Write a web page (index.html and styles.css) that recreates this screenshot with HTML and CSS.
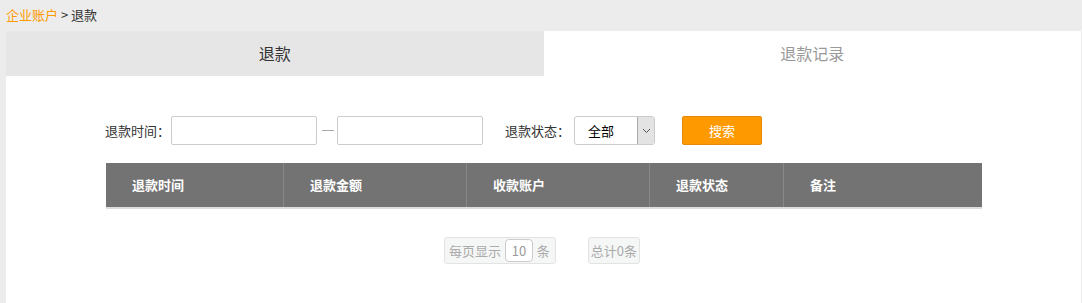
FILE: index.html
```html
<!DOCTYPE html>
<html>

<head>
    <title>退款</title>
    <link rel="stylesheet" href="styles.css">
</head>

<body>
    <div class="crumb"><a href="#">企业账户</a> &gt; 退款</div>

    <div class="panel">
        <div class="tabs">
            <div class="tab active">退款</div>
            <div class="tab">退款记录</div>
        </div>

        <div class="filter">
            <span class="label">退款时间：</span>
            <input type="text" class="date-input">
            <span class="dash"></span>
            <input type="text" class="date-input">
            <span class="label status-label">退款状态：</span>
            <div class="select-box">
                <span class="select-text">全部</span>
                <span class="select-arrow">
                    <svg width="9" height="6" viewBox="0 0 9 6"><path d="M1 1 L4.5 4.5 L8 1" fill="none" stroke="#555" stroke-width="1"/></svg>
                </span>
            </div>
            <button class="search-btn">搜索</button>
        </div>

        <div class="table-head">
            <div class="col c1">退款时间</div>
            <div class="col c2">退款金额</div>
            <div class="col c3">收款账户</div>
            <div class="col c4">退款状态</div>
            <div class="col c5">备注</div>
        </div>

        <div class="pager">
            <div class="pager-box">每页显示 <span class="page-size">10</span> 条</div>
            <div class="pager-box total">总计0条</div>
        </div>
    </div>
</body>

</html>
```

FILE: styles.css
```css
/* General Styles */
body {
    margin: 0;
    background-color: #ececec;
    font-family: "Noto Sans CJK SC", "Liberation Sans", sans-serif;
    font-size: 12px;
    color: #333;
    height: 303px;
    overflow: hidden;
}

.crumb {
    height: 31px;
    line-height: 29px;
    padding-left: 6px;
    font-size: 13px;
    color: #333;
}

.crumb a {
    color: #ff9900;
    text-decoration: none;
}

.panel {
    margin-left: 6px;
    width: 1075px;
    background-color: #fff;
    height: 272px;
}

/* Tabs */
.tabs {
    display: flex;
    height: 45px;
}

.tab {
    flex: 1;
    text-align: center;
    line-height: 45px;
    font-size: 16px;
    color: #999;
}

.tab.active {
    background-color: #e6e6e6;
    color: #333;
}

/* Filter */
.filter {
    display: flex;
    align-items: center;
    padding: 40px 0 0 99px;
    height: 29px;
    font-size: 13px;
}

.label {
    margin-right: 1px;
}

.date-input {
    width: 146px;
    height: 29px;
    box-sizing: border-box;
    border: 1px solid #ccc;
    border-radius: 2px;
    margin: 0;
}

.dash {
    display: inline-block;
    width: 12px;
    height: 1px;
    background-color: #aaa;
    margin: 0 3px 0 5px;
}

.status-label {
    margin-left: 22px;
    margin-right: 4px;
}

.select-box {
    display: flex;
    width: 81px;
    height: 29px;
    box-sizing: border-box;
    border: 1px solid #ccc;
    border-radius: 3px;
}

.select-text {
    flex: 1;
    line-height: 27px;
    padding-left: 13px;
    color: #000;
}

.select-arrow {
    width: 16px;
    background-color: #e3e3e3;
    border-left: 1px solid #aaa;
    display: flex;
    align-items: center;
    justify-content: center;
}

.search-btn {
    margin-left: 27px;
    width: 80px;
    height: 29px;
    background-color: #ff9900;
    border: 1px solid #e5890a;
    border-radius: 2px;
    color: #fff;
    font-family: inherit;
    font-size: 13px;
}

/* Table Header */
.table-head {
    display: flex;
    margin: 18px 0 0 100px;
    width: 876px;
    height: 46px;
    background-color: #737373;
    border-bottom: 2px solid #ddd;
    box-sizing: border-box;
}

.col {
    color: #fff;
    font-weight: bold;
    font-size: 13px;
    line-height: 44px;
    padding-left: 26px;
    box-sizing: border-box;
    border-right: 1px solid #888;
}

.c1 { width: 178px; }
.c2 { width: 183px; }
.c3 { width: 183px; }
.c4 { width: 134px; }
.c5 { width: 198px; border-right: none; }

/* Pager */
.pager {
    display: flex;
    margin: 28px 0 0 438px;
    gap: 32px;
}

.pager-box {
    height: 27px;
    line-height: 25px;
    box-sizing: border-box;
    border: 1px solid #e3e3e3;
    border-radius: 3px;
    background-color: #f5f6f6;
    color: #aaa;
    padding: 0 5px 0 4px;
    font-size: 13px;
    word-spacing: 1px;
}

.page-size {
    display: inline-block;
    width: 28px;
    height: 23px;
    line-height: 21px;
    box-sizing: border-box;
    border: 1px solid #ccc;
    border-radius: 4px;
    background-color: #fff;
    text-align: center;
    color: #999;
}

.total {
    padding: 0 2px;
}
```
